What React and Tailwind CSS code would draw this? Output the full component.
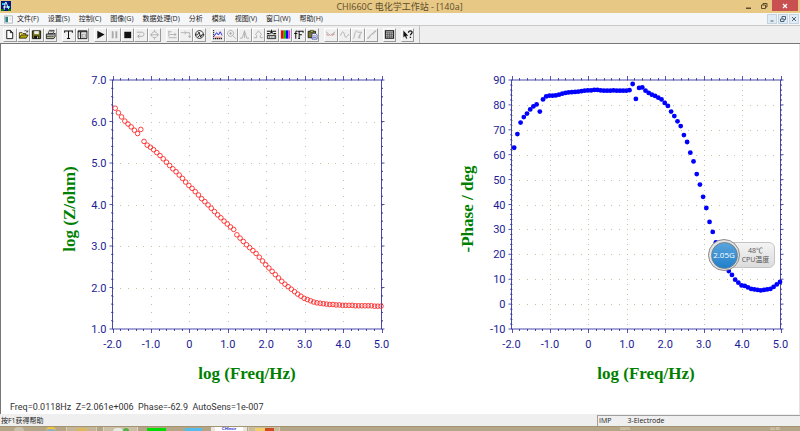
import React from 'react';

const menus = [
  '文件(F)', '设置(S)', '控制(C)', '图像(G)', '数据处理(D)',
  '分析', '模拟', '视图(V)', '窗口(W)', '帮助(H)',
];

const K = '#111';
const G = '#a9a9a9';

// every glyph is drawn on a 12x12 grid
const icons = {
  new: <path d="M3 1.5h4l2.5 2.5v6.5H3zM7 1.5V4h2.5" fill="#fff" stroke={K} />,
  open: (
    <>
      <path d="M1.5 10V4h3l1 1h3v1.5" fill="#f4e04a" stroke={K} strokeWidth=".8" />
      <path d="M1.5 10l2-3.5h7.5L9 10z" fill="#b8a800" stroke={K} strokeWidth=".8" />
      <path d="M7 2.2c1.200-1 2.500-.6 3 .8M10.600 1.500v1.800H8.900" fill="none" stroke={K} strokeWidth=".7" />
    </>
  ),
  save: (
    <>
      <path d="M1.500 2h9v8.500h-9z" fill="#6b6b10" stroke={K} />
      <path d="M3.500 2.300h5v3.400h-5z" fill="#eee" />
      <path d="M3.500 7.500h5V10.500h-5z" fill={K} />
      <path d="M6.800 8.200h1v1.800h-1z" fill="#fff" />
    </>
  ),
  print: (
    <>
      <path d="M3.500 5l1.300-3.500H10L8.800 5z" fill="#fff" stroke={K} strokeWidth=".8" />
      <path d="M1.500 5.500h8l1.500-1v4l-1.500 2h-8z" fill="#bbb" stroke={K} strokeWidth=".9" />
      <path d="M2 8h7.500M5.500 3h3" stroke={K} strokeWidth=".7" />
      <path d="M6.500 9h1.700" stroke="#cc0" />
    </>
  ),
  text: <path d="M1.800 4V2.200h8.400V4M6 2.200v8M4.300 10.300h3.400" fill="none" stroke={K} strokeWidth="1.100" />,
  panel: (
    <>
      <path d="M1.200 2h9.600v8.500H1.200z" fill="#fff" stroke={K} />
      <path d="M1.200 3h9.600M4 3.500v7" stroke={K} strokeWidth="1.200" />
      <path d="M2 5.500h1.500M2 7.500h1.500M5.500 5.500h4v3.500h-4z" stroke="#777" fill="#ddd" strokeWidth=".6" />
    </>
  ),
  play: <path d="M2.500 1.800L10.500 6l-8 4.500z" fill={K} />,
  pause: <path d="M3 2.500h2v7.500H3zM7 2.500h2v7.500H7z" fill={G} />,
  stop: <path d="M2.500 3h7.500v7H2.500z" fill={K} />,
  reverse: <path d="M2 3.500h5.500c3 0 3 4.500 0 4.500H3M5 6L2.800 8 5 10" fill="none" stroke={G} />,
  zero: <path d="M1 6.300h2M9 6.300h2M6 1v2M6 9.500v2M6 3a3.300 3.300 0 1 0 .01 0M3 6.300h6" fill="none" stroke={G} strokeWidth=".9" />,
  axisStep: <path d="M2 2v6.500M2 3h3M3 6h7M8 4.500L10 6 8 7.500M2 9.500h8.500" fill="none" stroke={G} strokeWidth=".9" />,
  axisDown: <path d="M1 4h6M7.500 4h3v5M9 7.500l1.500 2L12 7.500M5 2.500L7 4 5 5.500" fill="none" stroke={G} strokeWidth=".9" />,
  rotate: (
    <>
      <path d="M6 1.700a4.300 4.300 0 1 0 .01 0" fill="none" stroke={K} strokeWidth=".9" />
      <path d="M1 6.300h3l1.500-3 1.700 5.500 1.300-2.500h2.800M4 9l2-2 2 2" fill="none" stroke={K} strokeWidth=".9" />
    </>
  ),
  plot: (
    <>
      <path d="M1.800 1v9.500H11" fill="none" stroke={K} strokeWidth="1.100" strokeDasharray="1.500 .7" />
      <path d="M2.500 7.500L5 4l2 2.500L9 3l2 4" fill="none" stroke="#2222dd" />
      <path d="M3 9h8" stroke="#d44" strokeWidth=".7" />
    </>
  ),
  zoom: <path d="M5 1.500a3.300 3.300 0 1 0 .01 0M7.500 7.300L11 10.800M3.300 4.800h3.400M5 3.100v3.400" fill="none" stroke={G} strokeWidth=".9" />,
  peakBase: <path d="M1 10h2.500L6 2l2.500 8H11M6 2v8" fill="none" stroke={G} strokeWidth=".9" />,
  peakShape: <path d="M1 9.500h3V7L2.800 6 6 2l3.200 4L8 7v2.500h3" fill="none" stroke={G} strokeWidth=".9" />,
  overlay: (
    <>
      <path d="M1 2.500h4M1 5h3M7 2.500h4M8 5h3M5 5l1-3 1 3" fill="none" stroke={K} strokeWidth="1.200" />
      <path d="M1.500 7h9v3.500h-9z" fill="#ddd" stroke={K} strokeWidth=".9" />
      <path d="M3 8.700h1.500M6 8.700h1M8.500 8.700h1" stroke={K} />
    </>
  ),
  colors: (
    <>
      <path d="M1 1.500h3v9H1z" fill="#f00" />
      <path d="M4 1.500h2.500v9H4z" fill="#00c000" />
      <path d="M6.500 1.500H9v9H6.500z" fill="#00f" />
      <path d="M9 1.500h2v9H9z" fill="#e040e0" />
    </>
  ),
  font: <path d="M5 2.800C3.600 1.600 3 2.600 3 4v6.500M1.300 5h3.400M6.700 2.500v8M5.500 2.500H11v1.700M6.700 6.300h3M5.700 10.400h2" fill="none" stroke={K} strokeWidth="1.100" />,
  paste: (
    <>
      <path d="M1.300 2.500h8v7h-8z" fill="#77752a" stroke={K} strokeWidth=".9" />
      <path d="M3.500 1.500h3.500v1.800H3.500z" fill="#dd5" stroke={K} strokeWidth=".6" />
      <path d="M5.500 5h4l1.500 1.500V11H5.500z" fill="#fff" stroke="#223399" strokeWidth=".8" />
      <path d="M6.500 7.500h3.300M6.500 9.200h3.300" stroke="#223399" strokeWidth=".7" />
    </>
  ),
  smooth: (
    <>
      <path d="M1 3l3 2.500L6 7l2-1.500L11 3" fill="none" stroke="#999" strokeWidth=".9" />
      <path d="M1.500 6L4 7M7.500 7L10.500 5.500" stroke="#d66" strokeWidth=".9" />
    </>
  ),
  wave: <path d="M1 7c2 0 1.500-4 3.200-4S6 10 7.800 9 9 6 11 6" fill="none" stroke={G} strokeWidth=".9" />,
  integral: <path d="M1 10.500c2 0 1.500-8 4-8.500h1M6 3.500h4.500L6.500 10M8.500 6v4.500" fill="none" stroke={G} strokeWidth=".9" />,
  slope: <path d="M1 10.500L10.500 1.500M2 10.500c3-.5 2-4 4-4.500s3-1 5-4" fill="none" stroke={G} strokeWidth=".9" />,
  grid: (
    <>
      <path d="M1.500 2h9v8h-9z" fill="#bbb" stroke={K} strokeWidth="1.100" />
      <path d="M2 4h8M4 4v6M6 4v6M8 4v6M2 6h8M2 8h8" stroke="#444" strokeWidth=".6" />
    </>
  ),
  help: (
    <>
      <path d="M1.500 1.500v7.800l1.800-1.600 1.200 3 1.200-.6-1.200-2.700h2.300z" fill={K} />
      <path d="M7 4c0-2.800 4-2.500 4-.4 0 1.500-1.800 1.500-1.800 3.200M9.200 8.500v1.300" fill="none" stroke={K} strokeWidth="1.400" />
    </>
  ),
};

const toolGroups = [
  { width: 'w-[54px]', tools: ['new', 'open', 'save', 'print'] },
  { width: 'w-[27px]', tools: ['text', 'panel'] },
  { width: 'w-[67px]', tools: ['play', 'pause', 'stop', 'reverse', 'zero'] },
  { width: 'w-[40px]', tools: ['axisStep', 'axisDown', 'rotate'] },
  { width: 'w-[108px]', tools: ['plot', 'zoom', 'peakBase', 'peakShape', 'overlay', 'colors', 'font', 'paste'] },
  { width: 'w-[54px]', tools: ['smooth', 'wave', 'integral', 'slope'] },
  { width: 'w-[13px]', tools: ['grid'] },
  { width: 'w-[13px]', tools: ['help'] },
];

const impedance = [
  6.32, 6.21, 6.11, 6.01, 5.94, 5.87, 5.79, 5.71, 5.81, 5.52, 5.43, 5.38,
  5.32, 5.25, 5.18, 5.10, 5.02, 4.94, 4.86, 4.79, 4.71, 4.63, 4.54, 4.46,
  4.39, 4.31, 4.23, 4.14, 4.07, 3.99, 3.91, 3.83, 3.75, 3.68, 3.60, 3.53,
  3.46, 3.40, 3.27, 3.19, 3.11, 3.03, 2.96, 2.89, 2.82, 2.73, 2.64, 2.55,
  2.47, 2.39, 2.31, 2.23, 2.15, 2.08, 2.02, 1.96, 1.90, 1.84, 1.79, 1.74,
  1.71, 1.68, 1.65, 1.63, 1.62, 1.61, 1.60, 1.59, 1.59, 1.58, 1.58, 1.57,
  1.57, 1.57, 1.57, 1.56, 1.56, 1.56, 1.56, 1.56, 1.56, 1.55, 1.55, 1.55,
];

const phase = [
  62.8, 68.3, 72.9, 75.1, 76.5, 78.2, 79.4, 80.2, 77.3, 82.2, 83.4, 83.7,
  83.7, 83.8, 84.1, 84.5, 84.8, 85.0, 85.1, 85.2, 85.3, 85.5, 85.7, 85.8,
  85.8, 86.0, 86.0, 85.8, 85.7, 85.7, 85.7, 85.8, 85.7, 85.7, 85.7, 85.7,
  85.9, 88.4, 82.4, 86.8, 87.0, 85.7, 84.8, 84.1, 83.6, 82.9, 82.2, 80.8,
  79.6, 77.3, 75.5, 73.4, 71.5, 67.9, 65.1, 60.8, 57.3, 52.2, 48.0, 43.1,
  38.6, 33.0, 29.0, 24.8, 21.6, 18.7, 16.0, 13.3, 11.7, 9.8, 8.6, 7.5,
  7.3, 6.7, 6.1, 5.9, 5.7, 5.5, 5.7, 5.9, 6.1, 6.9, 7.9, 8.9,
];

const NAVY = '#1c1c96';
const TOP = 36;
const HEIGHT = 249;
const WIDTH = 269;

const range = (n) => Array.from({ length: n }, (_, i) => i);

const Chart = ({ left, yMin, yMax, yStep, yLabel, yLabelX, formatY, values, filled }) => {
  const right = left + WIDTH;
  const bottom = TOP + HEIGHT;
  const xPos = (v) => left + ((v + 2) / 7) * WIDTH;
  const yPos = (v) => bottom - ((v - yMin) / (yMax - yMin)) * HEIGHT;
  const rows = Math.round((yMax - yMin) / yStep);

  const xMinor = range(36).map((i) => ({ x: xPos(-2 + i / 5), major: i % 5 === 0 }));
  const yMinor = range(rows * 5 + 1).map((i) => ({ y: yPos(yMin + (i * yStep) / 5), major: i % 5 === 0 }));

  return (
    <svg viewBox="0 0 400 356" className="block w-full" role="img" aria-label={yLabel}>
      <g fill="#c3c3a0">
        {xMinor.map(({ x, major: xMajor }) =>
          yMinor.map(({ y, major: yMajor }) =>
            xMajor || yMajor ? <rect key={`${x}-${y}`} x={Math.round(x)} y={Math.round(y)} width="1" height="1" /> : null
          )
        )}
      </g>
      <g stroke={NAVY} strokeWidth="1" fill="none">
        <rect x={left} y={TOP} width={WIDTH} height={HEIGHT} strokeOpacity=".8" />
        {xMinor.map(({ x, major }) => (
          <path
            key={x}
            strokeOpacity=".75"
            d={`M${Math.round(x) + 0.5} ${TOP}v${major ? -4 : -2}M${Math.round(x) + 0.5} ${bottom}v${major ? 4 : 2}`}
          />
        ))}
        {yMinor.map(({ y, major }) => (
          <path key={y} strokeOpacity=".75" d={`M${left} ${y}h${major ? -3 : -1.5}M${right} ${y}h${major ? 3 : 1.5}`} />
        ))}
      </g>
      <g fill={NAVY} className="font-['Roboto','Liberation_Sans',sans-serif] text-[11px]">
        {range(rows + 1).map((i) => (
          <text key={i} x={left - 6} y={yPos(yMin + i * yStep) + 4} textAnchor="end">
            {formatY(yMin + i * yStep)}
          </text>
        ))}
        {range(8).map((i) => (
          <text key={i} x={xPos(i - 2)} y="304" textAnchor="middle">
            {i === 2 ? '0' : (i - 2).toFixed(1)}
          </text>
        ))}
      </g>
      <g fill="#008000" className="font-['Liberation_Serif',serif] text-[17px] font-bold">
        <text x={left + WIDTH / 2} y="335" textAnchor="middle">log (Freq/Hz)</text>
        <text transform={`translate(${yLabelX} 165) rotate(-90)`} textAnchor="middle">{yLabel}</text>
      </g>
      {values.map((v, i) => (
        <circle
          key={i}
          cx={xPos(-1.93 + i / 12)}
          cy={yPos(v)}
          r={filled ? 2.4 : 2.3}
          fill={filled ? '#0000ff' : 'none'}
          stroke={filled ? 'none' : '#ff2a2a'}
          strokeWidth=".9"
        />
      ))}
    </svg>
  );
};

const TitleBar = () => (
  <header className="flex h-[13px] shrink-0 items-start bg-[#e7c885]">
    <div className="flex flex-1 items-center pt-px pl-px">
      <svg viewBox="0 0 10 10" className="h-[10px] w-[10px]">
        <path d="M0 0h10v10H0z" fill="#001a80" />
        <path d="M1 2h3v2H1zM6 5h3v2H6z" fill="#19c7e8" />
        <path d="M4.500 1L3 9M5 1l3 8M2 6h6" stroke="#fff" strokeWidth=".9" />
        <path d="M0 8h3v2H0zM7 8h3v2H7z" fill="#071" />
      </svg>
    </div>
    <h1 className="text-[9px] leading-[13px] text-[#5d4c2b]">CHI660C 电化学工作站 - [140a]</h1>
    <div className="flex flex-1 justify-end pr-[2px]">
      <button aria-label="最小化" className="flex h-[11px] w-[15px] items-center justify-center">
        <svg viewBox="0 0 8 8" className="h-2 w-2"><path d="M2 5.500h5v1.500H2z" fill="#5d4c2b" /></svg>
      </button>
      <button aria-label="还原" className="flex h-[11px] w-[17px] items-center justify-center">
        <svg viewBox="0 0 8 8" className="h-2 w-2" fill="none" stroke="#5d4c2b">
          <path d="M1.500 3h4v3.500h-4zM3 3V1.500h4V5H5.500" />
        </svg>
      </button>
      <button aria-label="关闭" className="flex h-[11px] w-[26px] items-center justify-center bg-[#c95050]">
        <svg viewBox="0 0 8 8" className="h-2 w-2"><path d="M2 2l4 4M6 2L2 6" stroke="#fff" strokeWidth="1.200" /></svg>
      </button>
    </div>
  </header>
);

const childButtons = [
  { label: '最小化文档', d: 'M2.500 6h3' },
  { label: '还原文档', d: 'M1.500 4h3.500v2.500H1.500zM3 4V1.500h3.500V4.500H5' },
  { label: '关闭文档', d: 'M2 2l4 4M6 2L2 6' },
];

const MenuBar = () => (
  <nav className="flex h-[13px] shrink-0 items-center border-b border-[#c9c9c9] bg-[#f5f6f7] pl-1">
    <svg viewBox="0 0 10 9" className="mr-1 h-[9px] w-[9px]">
      <path d="M.5.500h9v8h-9z" fill="#fff" stroke="#aab4bb" />
      <path d="M1.500 1.500h3v6h-3z" fill="#2d7f86" />
      <path d="M6 3h2.500M6 5h2.500" stroke="#bbb" strokeWidth=".7" />
    </svg>
    <div className="flex flex-1 gap-[9px] text-[7px] leading-[12px] text-[#222]">
      {menus.map((m) => (
        <button key={m} className="whitespace-nowrap">{m}</button>
      ))}
    </div>
    <div className="flex gap-px pr-px">
      {childButtons.map((b) => (
        <button key={b.label} aria-label={b.label} className="flex h-[10px] w-[10px] items-center justify-center border border-[#c3d3e0] bg-[#dfebf5]">
          <svg viewBox="0 0 8 8" className="h-2 w-2" fill="none" stroke="#4f6070"><path d={b.d} /></svg>
        </button>
      ))}
    </div>
  </nav>
);

const ToolBar = () => (
  <div className="flex h-[18px] shrink-0 items-center gap-[5px] border-b border-[#777] bg-[#efefef] pl-[3px]">
    {toolGroups.map((group) => (
      <div key={group.tools[0]} className={`flex ${group.width}`}>
        {group.tools.map((t) => (
          <button
            key={t}
            aria-label={t}
            className="flex h-[14px] flex-1 items-center justify-center border border-t-white border-r-[#9a9a9a] border-b-[#9a9a9a] border-l-white bg-[#f0f0f0]"
          >
            <svg viewBox="0 0 12 12" className="h-[11px] w-[11px] shrink-0">{icons[t]}</svg>
          </button>
        ))}
      </div>
    ))}
    <div className="h-full border-l border-[#bdbdbd]" />
  </div>
);

const CpuWidget = () => (
  <div className="absolute top-[195px] right-[25px] flex items-center">
    <div className="z-10 -mr-4 flex h-8 w-8 items-center justify-center rounded-full border border-[#8c8c8c] bg-[#e3e3e3]">
      <div className="flex h-[27px] w-[27px] items-center justify-center rounded-full border border-[#6d7f8c] bg-linear-to-b from-[#5aa5dc] to-[#1c7fcb] font-['Open_Sans',sans-serif] text-[8px] text-white">
        2.05G
      </div>
    </div>
    <div className="flex h-[26px] w-[51px] flex-col justify-center rounded-md border border-[#c4c4c4] bg-linear-to-b from-[#f4f4f4] to-[#dcdcdc] pl-3 text-center text-[7px] leading-[9px] text-[#555]">
      <span>48℃</span>
      <span className="whitespace-nowrap">CPU温度</span>
    </div>
  </div>
);

const TaskBar = () => (
  <footer className="flex h-[5px] shrink-0 items-start overflow-hidden border-t border-[#a49474] bg-[#b5a587] text-[4px] leading-[4px]">
    <div className="ml-[14px] h-1 w-[10px] rounded-t-full bg-[#c9c0ac]" />
    <div className="ml-[22px] h-1 w-[10px] rounded-t-full border-t-2 border-[#f0c63c] bg-[#8fb0c4]" />
    <div className="ml-[10px] flex h-1 w-[31px] justify-center border-x border-[#d8cdb5] bg-[#c3b596]">
      <div className="mt-px h-1 w-[10px] bg-[#d9b95c]" />
    </div>
    <div className="ml-[6px] flex h-1 w-[35px] justify-center border-x border-[#e0d8c4] bg-[#cbbfa5]">
      <div className="mt-px h-1 w-[10px] rounded-t-full bg-[#e6ece2]" />
      <div className="mt-px h-1 w-[6px] rounded-t-full bg-[#55b04a]" />
    </div>
    <div className="mt-px ml-[9px] h-1 w-[19px] bg-[#00dc00]" />
    <div className="mt-px ml-[19px] h-1 w-[17px] bg-[#56bdea]" />
    <div className="ml-[9px] h-1 w-[36px] bg-[#e9e6e0] px-1">
      <div className="bg-white text-center font-['Liberation_Sans',sans-serif] font-bold text-[#2222cc]">CHInstr</div>
    </div>
    <div className="ml-px flex h-1 w-[32px] justify-center border-x border-[#d8cdb5] bg-[#c9bb9d]">
      <div className="mt-px h-1 w-[10px] bg-[#f3cf6a]" />
      <div className="mt-px h-1 w-[9px] bg-[#cf4a1f]" />
    </div>
    <div className="flex flex-1 justify-end gap-[140px] pr-[20px] font-['Liberation_Sans',sans-serif] text-[#eee8da]">
      <span>100%</span>
      <span>10:35</span>
    </div>
  </footer>
);

export default function App() {
  return (
    <div className="flex min-h-screen flex-col bg-white font-['Open_Sans','Noto_Sans_CJK_SC',sans-serif]">
      <TitleBar />
      <MenuBar />
      <ToolBar />
      <main className="flex flex-1 flex-col justify-between shadow-[inset_1px_0_0_#777,inset_-1px_0_0_#e3e3e3]">
        <div className="grid grid-cols-2">
          <Chart
            left={112.5}
            yMin={1}
            yMax={7}
            yStep={1}
            yLabel="log (Z/ohm)"
            yLabelX={75}
            formatY={(v) => v.toFixed(1)}
            values={impedance}
          />
          <div className="relative">
            <Chart
              left={111.5}
              yMin={-10}
              yMax={90}
              yStep={10}
              yLabel="-Phase / deg"
              yLabelX={73}
              formatY={(v) => v}
              values={phase}
              filled
            />
            <CpuWidget />
          </div>
        </div>
        <p className="pl-[10px] font-['Roboto','Liberation_Sans',sans-serif] text-[9px] leading-[14px] whitespace-pre text-[#333]">
          {'Freq=0.0118Hz  Z=2.061e+006  Phase=-62.9  AutoSens=1e-007'}
        </p>
      </main>
      <div className="flex h-3 shrink-0 items-end bg-[#efefef] text-[7px] leading-[10px] text-[#222]">
        <span className="flex-1 pl-px">按F1获得帮助</span>
        <div className="flex w-[203px] gap-4 border-t border-l border-[#a0a0a0] pl-px">
          <span>IMP</span>
          <span>3-Electrode</span>
        </div>
      </div>
      <TaskBar />
    </div>
  );
}
